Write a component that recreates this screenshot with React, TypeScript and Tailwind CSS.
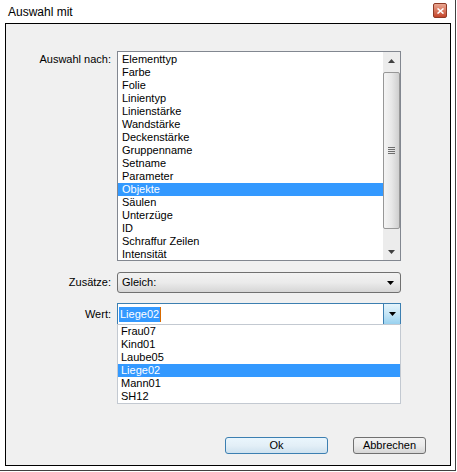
const font = { fontFamily: '"Liberation Sans", Arial, sans-serif' };

const items = [
  "Elementtyp",
  "Farbe",
  "Folie",
  "Linientyp",
  "Linienstärke",
  "Wandstärke",
  "Deckenstärke",
  "Gruppenname",
  "Setname",
  "Parameter",
  "Objekte",
  "Säulen",
  "Unterzüge",
  "ID",
  "Schraffur Zeilen",
  "Intensität",
];

const values = ["Frau07", "Kind01", "Laube05", "Liege02", "Mann01", "SH12"];

function ArrowUp() {
  return (
    <svg width="7" height="4" viewBox="0 0 7 4">
      <path d="M3.5 0 L7 4 L0 4 Z" fill="#404040" />
    </svg>
  );
}

function ArrowDown({ color = "#404040" }: { color?: string }) {
  return (
    <svg width="7" height="4" viewBox="0 0 7 4">
      <path d="M0 0 L7 0 L3.5 4 Z" fill={color} />
    </svg>
  );
}

export default function App() {
  return (
    <div
      className="w-[456px] h-[471px] bg-white border-r border-b border-[#404040] text-black text-[11px]"
      style={font}
    >
      {/* Title bar */}
      <div className="h-[23px] flex items-center justify-between pl-[8px] pr-[8px]">
        <span className="text-[12px] leading-none">Auswahl mit</span>
        <div className="w-[14px] h-[15px] -mt-[2px] rounded-[2px] border border-[#8f3a26] bg-gradient-to-b from-[#e9a691] to-[#c4442a] flex items-center justify-center">
          <svg width="7" height="6" viewBox="0 0 7 6">
            <path d="M0.5 0.5 L6.5 5.5 M6.5 0.5 L0.5 5.5" stroke="white" strokeWidth="1.6" />
          </svg>
        </div>
      </div>

      {/* Panel */}
      <div className="ml-[5px] w-[446px] h-[443px] border border-black bg-[#f0f0f0] flex flex-col pt-[27px] pb-[11px]">
        {/* Auswahl nach */}
        <div className="flex gap-[6px]">
          <div className="w-[105px] text-right leading-[13px] pt-[2px]">Auswahl nach:</div>
          <div className="w-[284px] h-[210px] border border-[#828790] bg-white flex">
            <div className="flex-1 pt-[1px] overflow-hidden">
              {items.map((it) => (
                <div
                  key={it}
                  className={`h-[13px] leading-[13px] pl-[4px] whitespace-nowrap ${
                    it === "Objekte" ? "bg-[#3399ff] text-white" : ""
                  }`}
                >
                  {it}
                </div>
              ))}
            </div>
            <div className="w-[17px] bg-[#ececec] flex flex-col">
              <div className="h-[17px] flex items-center justify-center">
                <ArrowUp />
              </div>
              <div className="mt-[3px] h-[157px] mx-[0px] border border-[#979797] rounded-[2px] bg-gradient-to-r from-[#f4f4f4] via-[#e8e8e8] to-[#cfcfcf] flex items-center justify-center">
                <div className="flex flex-col gap-[1px]">
                  <div className="w-[7px] h-[1px] bg-[#6d6d6d]" />
                  <div className="w-[7px] h-[1px] bg-[#6d6d6d]" />
                  <div className="w-[7px] h-[1px] bg-[#6d6d6d]" />
                  <div className="w-[7px] h-[1px] bg-[#6d6d6d]" />
                </div>
              </div>
              <div className="flex-1" />
              <div className="h-[17px] flex items-center justify-center">
                <ArrowDown />
              </div>
            </div>
          </div>
        </div>

        {/* Zusätze */}
        <div className="flex gap-[6px] mt-[11px] items-center">
          <div className="w-[105px] text-right">Zusätze:</div>
          <div className="w-[284px] h-[21px] border border-[#707070] rounded-[3px] bg-gradient-to-b from-[#f2f2f2] via-[#ebebeb] to-[#d6d6d6] flex items-center pl-[4px] pr-[6px]">
            <span className="flex-1">Gleich:</span>
            <ArrowDown color="#000" />
          </div>
        </div>

        {/* Wert */}
        <div className="flex gap-[6px] mt-[10px] items-center">
          <div className="w-[105px] text-right">Wert:</div>
          <div className="relative w-[284px] h-[22px] border border-[#3c7fb1] bg-white flex items-center">
            <div className="flex-1 pl-[1px] flex items-center">
              <span className="bg-[#3399ff] text-white leading-[15px] px-[1px]">Liege02</span>
              <span className="w-[1px] h-[15px] bg-[#d86a00]" />
            </div>
            <div className="w-[17px] h-full border-l border-[#3c7fb1] bg-gradient-to-b from-[#e5f4fc] via-[#c4e5f6] to-[#98d1ef] flex items-center justify-center">
              <ArrowDown color="#000" />
            </div>
            {/* Open dropdown list */}
            <div className="absolute left-[-1px] top-[20px] w-[284px] h-[80px] border border-[#c3c9d1] bg-white">
              {values.map((v) => (
                <div
                  key={v}
                  className={`h-[13px] leading-[13px] pl-[3px] ${
                    v === "Liege02" ? "bg-[#3399ff] text-white" : ""
                  }`}
                >
                  {v}
                </div>
              ))}
            </div>
          </div>
        </div>

        {/* Buttons */}
        <div className="mt-auto flex justify-end gap-[25px] pr-[24px]">
          <button className="w-[103px] h-[17px] border border-[#3c7fb1] rounded-[3px] bg-gradient-to-b from-[#eaf6fd] via-[#e3eff7] to-[#cfe2ef] flex items-center justify-center leading-none">
            Ok
          </button>
          <button className="w-[73px] h-[17px] border border-[#707070] rounded-[3px] bg-gradient-to-b from-[#f2f2f2] via-[#ebebeb] to-[#d6d6d6] flex items-center justify-center leading-none">
            Abbrechen
          </button>
        </div>
      </div>
    </div>
  );
}
